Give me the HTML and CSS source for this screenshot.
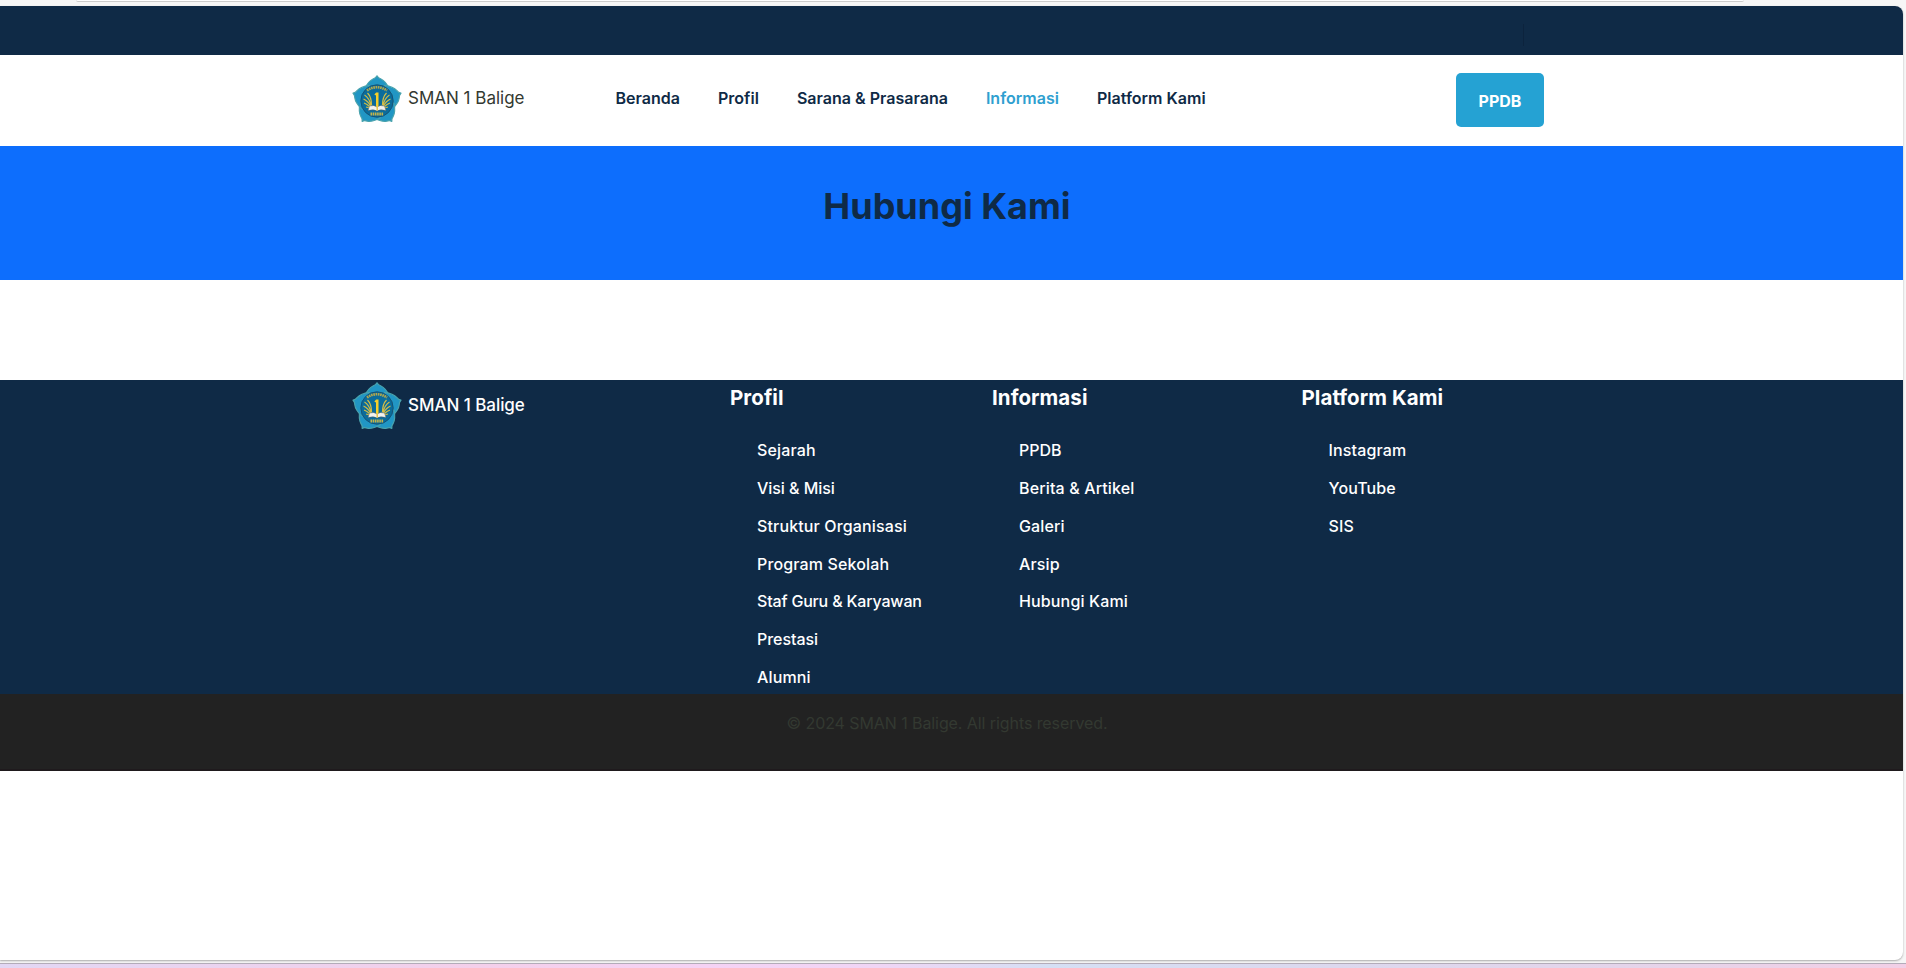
FILE: index.html
```html
<!DOCTYPE html>
<html lang="id">
<head>
<meta charset="utf-8">
<title>SMAN 1 Balige - Hubungi Kami</title>
<link rel="stylesheet" href="styles.css">
</head>
<body>
<svg class="defs" width="0" height="0" aria-hidden="true">
  <symbol id="crest" viewBox="0 0 50 48">
    <g fill="#2196c4" stroke="#4aa3ad" stroke-width="1.2" stroke-linejoin="round">
      <path id="petal" d="M12.500 14Q16.500 6 21 4Q24 3 25 .8Q26 3 29 4Q33.500 6 37.500 14L25 26Z"/>
      <use href="#petal" transform="rotate(72 25 26)"/>
      <use href="#petal" transform="rotate(144 25 26)"/>
      <use href="#petal" transform="rotate(216 25 26)"/>
      <use href="#petal" transform="rotate(288 25 26)"/>
    </g>
    <circle cx="25" cy="26" r="16.2" fill="#0b6c9b" stroke="#174f70" stroke-width=".9"/>
    <path d="M15 15.500Q25 9 35 15.500" fill="none" stroke="#b5a84b" stroke-width="2.600" stroke-dasharray="1.600 .7"/>
    <path d="M18.500 39H31.500" stroke="#c4b44b" stroke-width="2.800" stroke-dasharray="1.600 .6"/>
    <g fill="none" stroke="#d3bd45" stroke-width="1.200">
      <path id="wing" d="M15.500 18Q19.500 22 19.500 30M12.500 20Q17.500 23 19 31M11.500 24Q16 26 18.500 31M12 28Q15 29 18 32M14 32L18 33"/>
      <use href="#wing" transform="matrix(-1 0 0 1 50 0)"/>
    </g>
    <path d="M22.300 19.500L24.200 17.500H26.500V32H24V20.500Z" fill="#f6cf28"/>
    <path d="M17.500 31Q22 29.500 25 32Q28 29.500 32.500 31L34 35.500Q28 34 25 36Q22 34 16 35.500Z" fill="#f3f3ee" stroke="#555e62" stroke-width=".5"/>
    <path d="M24.500 31H26V35.500H24.500Z" fill="#e9c74a"/>
  </symbol>
</svg>
<div class="toolbar-edge"></div>
<div class="page">
  <div class="topbar"><span class="divider"></span></div>
  <header class="header">
    <a class="brand"><svg class="crest"><use href="#crest"/></svg><span class="brand-name">SMAN 1 Balige</span></a>
    <nav class="nav">
      <a>Beranda</a><a>Profil</a><a>Sarana &amp; Prasarana</a><a class="active">Informasi</a><a>Platform Kami</a>
    </nav>
    <a class="cta">PPDB</a>
  </header>
  <section class="banner"><h1>Hubungi Kami</h1></section>
  <main class="content"></main>
  <footer class="footer">
    <a class="brand"><svg class="crest"><use href="#crest"/></svg><span class="brand-name">SMAN 1 Balige</span></a>
    <div class="col profile">
      <h2>Profil</h2>
      <ul>
        <li>Sejarah</li>
        <li class="even">Visi &amp; Misi</li>
        <li>Struktur Organisasi</li>
        <li>Program Sekolah</li>
        <li class="snug">Staf Guru &amp; Karyawan</li>
        <li class="even">Prestasi</li>
        <li>Alumni</li>
      </ul>
    </div>
    <div class="col info">
      <h2>Informasi</h2>
      <ul>
        <li class="even">PPDB</li>
        <li>Berita &amp; Artikel</li>
        <li>Galeri</li>
        <li>Arsip</li>
        <li>Hubungi Kami</li>
      </ul>
    </div>
    <div class="col platform">
      <h2>Platform Kami</h2>
      <ul>
        <li>Instagram</li>
        <li>YouTube</li>
        <li>SIS</li>
      </ul>
    </div>
  </footer>
  <div class="copyright">© 2024 SMAN 1 Balige. All rights reserved.</div>
</div>
<div class="taskbar-edge"></div>
</body>
</html>
```
FILE: styles.css
```css
* { box-sizing: border-box; }
body {
  margin: 0;
  height: 968px;
  overflow: hidden;
  display: flex;
  flex-direction: column;
  background: #f6f6f6;
  color: #333931;
  font-family: Inter, "Liberation Sans", sans-serif;
  font-size: 16px;
}
.defs { position: absolute; }
.toolbar-edge {
  flex: none;
  width: 1668px;
  height: 2px;
  margin: 0 0 4px 76px;
  background: #fff;
  border-bottom: 1px solid #ccc;
  border-radius: 0 0 8px 8px;
}
.page {
  flex: none;
  width: 1903px;
  height: 954px;
  overflow: hidden;
  background: #fff;
  border-radius: 0 8px 8px 0;
  box-shadow: 0 1px 2px #aaa;
}
.topbar { display: flex; height: 49px; background: #0f2a46; }
.divider { width: 1px; height: 22px; margin: 18px 0 0 1523px; background: #0c233d; }
.header { display: flex; height: 91px; padding-left: 352px; }
.brand { display: flex; flex: none; width: 263.5px; }
.crest { display: block; flex: none; width: 50px; height: 48px; margin: 20px 6px 0 0; }
.brand-name { align-self: flex-start; line-height: 24px; margin-top: 31px; font-size: 17px; white-space: nowrap; }
.nav { display: flex; flex: none; width: 840.5px; gap: 38px; padding-top: 31px; line-height: 24px; font-size: 16px; font-weight: 600; letter-spacing: .02px; color: #0f2a46; white-space: nowrap; }
.nav a { flex: none; }
.nav .active { color: #2f9fd0; }
.cta { display: flex; align-items: center; justify-content: center; width: 88px; height: 54px; margin-top: 18px; padding-top: 1px; background: #25a2d3; border-radius: 5px; color: #fff; font-size: 16px; font-weight: 700; }
.banner { height: 134px; background: #0d6efd; text-align: center; }
h1 { margin: 0; padding: 38px 9px 0 0; line-height: 44px; font-size: 36px; color: #0f2a46; }
.content { height: 100px; }
.footer { display: flex; height: 314px; padding-left: 352px; background: #0f2a46; color: #fff; }
.footer .brand { width: 378px; }
.footer .crest { margin-top: 2px; }
.footer .brand-name { margin-top: 13px; font-weight: 500; letter-spacing: -.05px; }
.col { flex: none; }
.profile { width: 262px; }
.info { width: 309.5px; }
h2 { margin: 0; padding-top: 6px; line-height: 24px; font-size: 20.5px; letter-spacing: .06px; }
ul { list-style: none; margin: 22.300px 0 0; padding: 0 0 0 27px; font-size: 16px; font-weight: 500; line-height: 37.8px; letter-spacing: .14px; }
.snug { letter-spacing: -.18px; }
.even { letter-spacing: -.05px; }
.copyright { height: 77px; padding: 17px 9px 0 0; background: #222; border-bottom: 2px solid #1f1a1d; color: #333931; text-align: center; line-height: 24px; letter-spacing: -.08px; }
.taskbar-edge { flex: none; height: 5px; margin-top: 3px; border-top: 1px solid #b3acb9; background: linear-gradient(90deg, #e2d7f4, #f4cfea 25%, #f5d2f4 37%, #f0d5f5 46%, #d5dff4 55%, #dcd8ee 70%, #e4d4ea 85%, #f2cfe6); }
```
